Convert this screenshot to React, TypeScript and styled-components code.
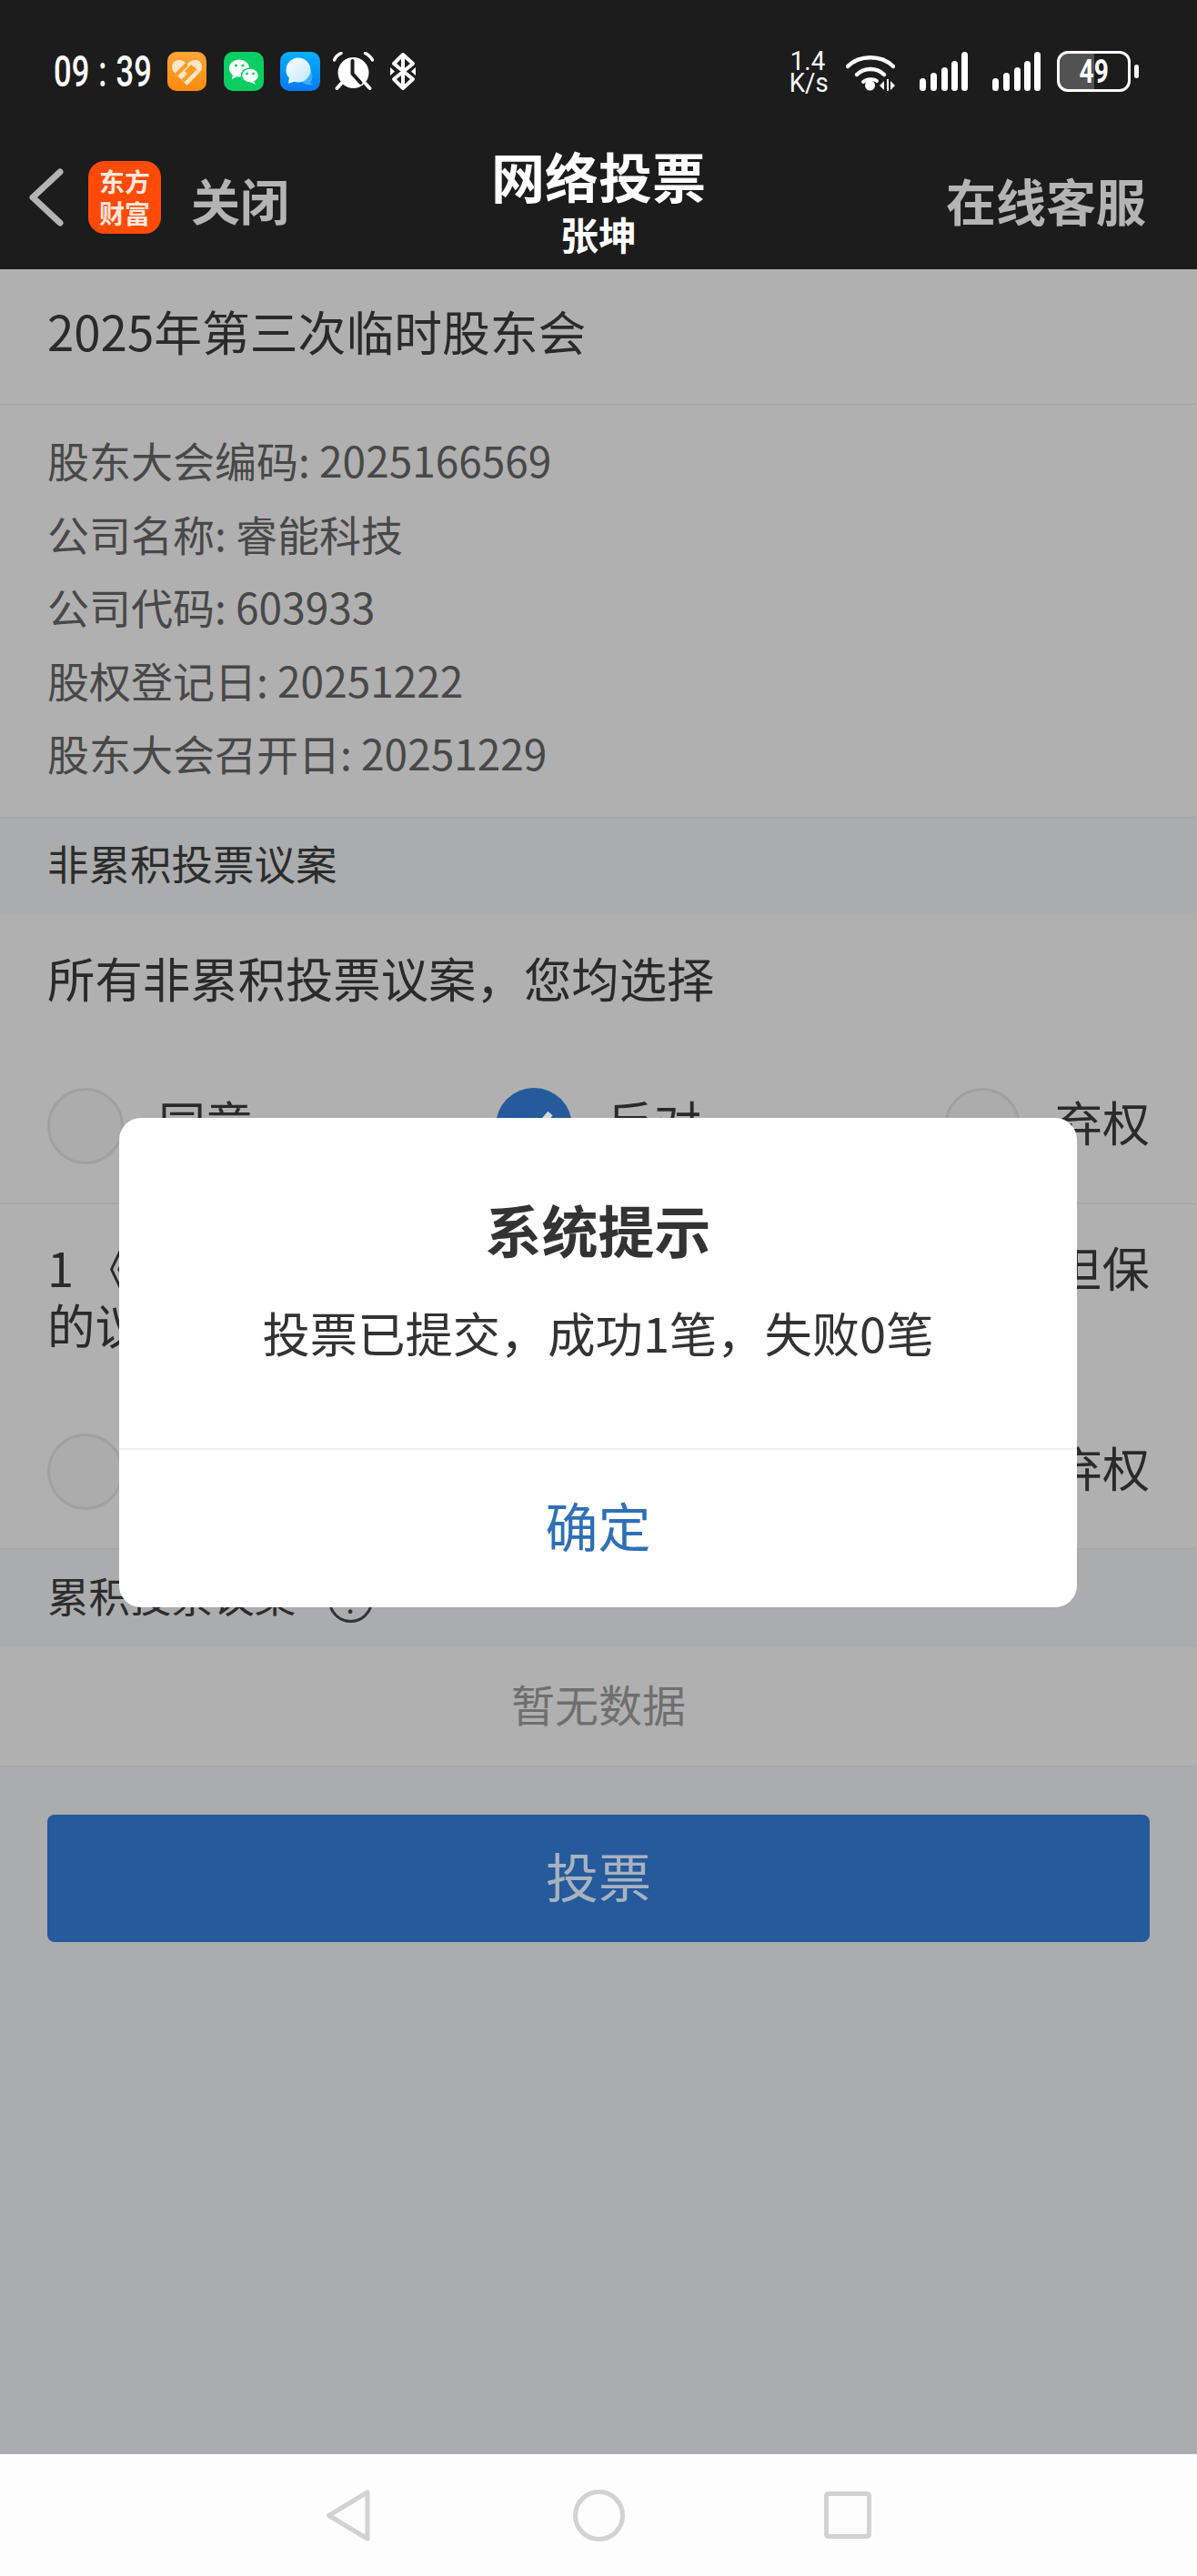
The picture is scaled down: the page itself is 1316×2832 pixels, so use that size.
import React from "react";
import styled, { createGlobalStyle } from "styled-components";

const Global = createGlobalStyle`
  html, body { margin: 0; padding: 0; background: #abacae; }
  * { box-sizing: border-box; }
  body { font-family: "Noto Sans CJK SC", "Noto Sans", sans-serif; }
`;

const Page = styled.div`
  position: relative;
  width: 1316px;
  height: 2832px;
  overflow: hidden;
  display: flex;
  flex-direction: column;
  background: #abacae;
`;

const StatusBar = styled.div`
  height: 130px;
  flex: none;
  background: #1c1c1c;
  display: flex;
  align-items: center;
  justify-content: space-between;
  padding: 27px 64px 0 59px;
  color: #fff;
`;
const StatusGroup = styled.div`
  display: flex;
  align-items: center;
`;
const Clock = styled.div`
  font: 500 48px/48px Roboto, sans-serif;
  width: 125px;
  flex: none;
  transform: scaleX(0.72);
  transform-origin: left center;
  white-space: nowrap;
`;
const ClockColon = styled.span`
  margin: 0 14px;
`;
const NotifySvg = styled.svg<{ $gap?: number }>`
  display: block;
  flex: none;
  margin-right: ${(p) => p.$gap ?? 0}px;
`;
const Speed = styled.div`
  font: 400 30px/24px Roboto, sans-serif;
  width: 44px;
  margin-right: 20px;
  text-align: center;
  white-space: nowrap;
  transform: scaleX(0.92);
`;
const Battery = styled.div`
  position: relative;
  width: 81px;
  height: 45px;
  border: 3px solid #fff;
  border-radius: 12px;
  overflow: hidden;
  display: flex;
  align-items: center;
  justify-content: center;
  background: linear-gradient(to right, #525252 0 38px, #1c1c1c 38px);
`;
const BatteryNum = styled.span`
  font: 700 36px/36px Roboto, sans-serif;
  transform: scaleX(0.78);
`;
const BatteryCap = styled.div`
  width: 5px;
  height: 15px;
  border-radius: 3px;
  background: #fff;
  margin-left: 4px;
`;

const NavBar = styled.div`
  height: 166px;
  flex: none;
  background: #1c1c1c;
  display: grid;
  grid-template-columns: 1fr auto 1fr;
  align-items: center;
  padding: 0 56px;
`;
const NavLeft = styled.div`
  display: flex;
  align-items: center;
  padding-top: 8px;
  margin-left: -25px;
`;
const AppLogo = styled.div`
  width: 80px;
  height: 80px;
  margin: 0 33px 0 27px;
  border-radius: 18px;
  background: #ff4a08;
  color: #ffe9df;
  display: flex;
  flex-direction: column;
  align-items: center;
  justify-content: center;
  font-weight: 700;
  font-size: 28px;
  line-height: 35px;
`;
const NavAction = styled.span`
  font-size: 54px;
  line-height: 60px;
  font-weight: 700;
  color: #b4b4b4;
  white-space: nowrap;
  margin-top: 6px;
`;
const NavRight = styled(NavAction)`
  justify-self: end;
  font-size: 55px;
  margin-top: 11px;
`;
const NavCenter = styled.div`
  display: flex;
  flex-direction: column;
  align-items: center;
  color: #fff;
  font-weight: 700;
  margin-top: 13px;
`;
const NavTitle = styled.div`
  font-size: 59px;
  line-height: 72px;
`;
const NavSub = styled.div`
  font-size: 42px;
  line-height: 50px;
  margin-top: 3px;
`;

const Plain = styled.div`
  background: #b0b0b0;
  border-bottom: 2px solid #a7a7a7;
`;
const MeetingTitle = styled(Plain)`
  height: 150px;
  padding: 32px 52px 0;
  font-size: 52.8px;
  line-height: 70px;
  color: #2a2a2a;
`;
const InfoBlock = styled(Plain)`
  height: 454px;
  padding: 19px 52px 0;
`;
const InfoLine = styled.div`
  font-size: 46px;
  line-height: 80.5px;
  color: #484848;
  white-space: nowrap;
`;
const SectionHead = styled.div<{ $h: number }>`
  height: ${(p) => p.$h}px;
  display: flex;
  align-items: center;
  gap: 36px;
  padding: 0 52px 10px;
  background: #abacae;
  font-size: 45.5px;
  color: #2c2c2c;
`;
const HelpMark = styled.span`
  width: 49px;
  height: 49px;
  margin-top: 14px;
  border: 3px solid #333;
  border-radius: 50%;
  display: flex;
  align-items: center;
  justify-content: center;
  font-size: 34px;
  line-height: 1;
  color: #333;
`;
const Question = styled(Plain)<{ $h: number }>`
  height: ${(p) => p.$h}px;
  padding: 37px 52px 0;
  display: flex;
  flex-direction: column;
`;
const QuestionText = styled.div`
  font-size: 52.4px;
  line-height: 63px;
  color: #2a2a2a;
  text-align: justify;
  text-align-last: left;
  flex: 1;
`;
const Options = styled.div`
  display: grid;
  grid-template-columns: 1fr auto 1fr;
  align-items: center;
  margin-bottom: 42px;
`;
const Option = styled.div<{ $align: string }>`
  display: flex;
  align-items: center;
  gap: 38px;
  justify-self: ${(p) => p.$align};
  font-size: 52px;
  color: #2a2a2a;
`;
const OptionLabel = styled.span`
  padding-bottom: 10px;
`;
const Radio = styled.span<{ $on?: boolean }>`
  width: 84px;
  height: 84px;
  border-radius: 50%;
  flex: none;
  display: flex;
  align-items: center;
  justify-content: center;
  background: ${(p) => (p.$on ? "#255a9c" : "#acacac")};
  border: ${(p) => (p.$on ? "none" : "3px solid #a0a0a0")};
`;
const Empty = styled(Plain)`
  height: 132px;
  padding-bottom: 8px;
  display: flex;
  align-items: center;
  justify-content: center;
  font-size: 48px;
  color: #6f6f6f;
`;
const Body = styled.div`
  flex: 1;
  padding: 52px 52px 0;
  background: #abacae;
`;
const VoteButton = styled.div`
  height: 140px;
  padding-bottom: 8px;
  border-radius: 8px;
  background: #255a9c;
  color: #a8b2bf;
  display: flex;
  align-items: center;
  justify-content: center;
  font-size: 58px;
`;
const BottomBar = styled.div`
  height: 134px;
  flex: none;
  background: #fdfdfd;
  display: flex;
  align-items: center;
  padding-left: 358px;
`;

const Modal = styled.div`
  position: absolute;
  left: 131px;
  top: 1229px;
  width: 1053px;
  height: 538px;
  border-radius: 24px;
  background: #fff;
  display: flex;
  flex-direction: column;
`;
const ModalBody = styled.div`
  height: 365px;
  flex: none;
  border-bottom: 2px solid #f0f0f0;
  padding-top: 78px;
  text-align: center;
  color: #333;
`;
const ModalTitle = styled.div`
  font-size: 62px;
  line-height: 88px;
  font-weight: 700;
`;
const ModalMessage = styled.div`
  font-size: 52.3px;
  line-height: 76px;
  margin-top: 31px;
`;
const ModalAction = styled.div`
  flex: 1;
  padding-bottom: 10px;
  display: flex;
  align-items: center;
  justify-content: center;
  font-size: 58px;
  color: #2f6fb6;
`;
const EdgeStrip = styled.div`
  position: absolute;
  left: 131px;
  top: 1648px;
  width: 5px;
  height: 56px;
  background: #e2e2e2;
`;

const Heart = () => (
  <NotifySvg $gap={19} width="43" height="43" viewBox="0 0 43 43">
    <defs>
      <linearGradient id="hg" x1="0" y1="0" x2="0" y2="1">
        <stop offset="0" stopColor="#ffa43a" />
        <stop offset="1" stopColor="#ff8a0c" />
      </linearGradient>
    </defs>
    <rect width="43" height="43" rx="10" fill="url(#hg)" />
    <path
      d="M21.5 37 L7 22 C3.5 17.5 5 10 11.5 9 C15.5 8.5 19 10.5 21.5 14 C24 10.5 28 8.5 32 9 C38 10 40 17.5 36 22 Z"
      fill="#ffe6c6"
    />
    <path d="M10 25 L21.5 13.5 M17 32 L31 18" stroke="#ff9a22" strokeWidth="4" fill="none" />
    <path d="M24 27 L32 19 L26 14 L19 21 Z" fill="#ff9a22" />
  </NotifySvg>
);
const WeChat = () => (
  <NotifySvg $gap={18} width="44" height="43" viewBox="0 0 44 43">
    <rect width="44" height="43" rx="10" fill="#0bce63" />
    <ellipse cx="17" cy="18" rx="11" ry="9.5" fill="#fff" />
    <path d="M10 24 L9 30 L15 27 Z" fill="#fff" />
    <ellipse cx="29" cy="26" rx="9.5" ry="8" fill="#fff" stroke="#0bce63" strokeWidth="1.5" />
    <path d="M33 32 L35 36 L29 33 Z" fill="#fff" />
    <circle cx="13.5" cy="15" r="1.6" fill="#0bce63" />
    <circle cx="21" cy="15" r="1.6" fill="#0bce63" />
    <circle cx="25.5" cy="24" r="1.4" fill="#0bce63" />
    <circle cx="32.5" cy="24" r="1.4" fill="#0bce63" />
  </NotifySvg>
);
const Bubble = () => (
  <NotifySvg $gap={14} width="44" height="43" viewBox="0 0 44 43">
    <defs>
      <linearGradient id="bg" x1="0" y1="0" x2="0" y2="1">
        <stop offset="0" stopColor="#06b0ff" />
        <stop offset="1" stopColor="#0a78f0" />
      </linearGradient>
      <linearGradient id="bw" x1="0" y1="0" x2="1" y2="1">
        <stop offset="0" stopColor="#ffffff" />
        <stop offset="1" stopColor="#bfe6ff" />
      </linearGradient>
    </defs>
    <rect width="44" height="43" rx="10" fill="url(#bg)" />
    <path d="M30 18 C36 20 37 30 33 34 L36 36 C30 37 26 35 24 33 Z" fill="#35b4f5" />
    <circle cx="20" cy="20" r="13.5" fill="url(#bw)" />
    <path d="M10 28 L9 35 L17 32 Z" fill="#e3f4ff" />
  </NotifySvg>
);
const Alarm = () => (
  <NotifySvg $gap={17} width="45" height="43" viewBox="0 0 45 43">
    <circle cx="22.5" cy="23" r="17" fill="#fff" />
    <path d="M1.5 9 C3 5.5 5.5 3 9 1.5 M35.5 1.5 C39 3 41.5 5.5 43.5 9" stroke="#fff" strokeWidth="3.5" fill="none" strokeLinecap="round" />
    <path d="M9 35 L4.5 40 M36 35 L40.5 40" stroke="#fff" strokeWidth="4" strokeLinecap="round" />
    <path d="M21.5 10 L21.5 24 L30.5 34" stroke="#1c1c1c" strokeWidth="4" fill="none" strokeLinecap="round" strokeLinejoin="round" />
  </NotifySvg>
);
const Bluetooth = () => (
  <NotifySvg width="30" height="43" viewBox="0 0 30 43">
    <path
      d="M15 3 L15 40 L26 30 L5 13 L15 3 Z M15 3 L26 13 L5 30 L15 40"
      fill="none"
      stroke="#fff"
      strokeWidth="4"
      strokeLinejoin="round"
    />
    <path d="M1 17 L6 21.5 L1 26 Z M29 17 L24 21.5 L29 26 Z" fill="#fff" />
  </NotifySvg>
);
const Wifi = () => (
  <NotifySvg $gap={27} width="54" height="44" viewBox="0 0 54 44">
    <path d="M2 16 C15 3 39 3 52 16" stroke="#fff" strokeWidth="4.5" fill="none" strokeLinecap="round" />
    <path d="M12 25 C20 17 34 17 42 25" stroke="#fff" strokeWidth="4.5" fill="none" strokeLinecap="round" />
    <path d="M19 33 C23 29.5 31 29.5 34 32" stroke="#fff" strokeWidth="4" fill="none" strokeLinecap="round" />
    <circle cx="26.5" cy="37" r="5.5" fill="#fff" />
    <path d="M42 32 L42 42 L37 37 Z M45 30 L47 30 L47 43 L45 43 Z M49 32 L54 37 L49 42 Z" fill="#fff" />
  </NotifySvg>
);
const Signal = ({ gap }: { gap: number }) => (
  <NotifySvg $gap={gap} width="53" height="43" viewBox="0 0 53 43">
    <rect x="0" y="29" width="7" height="14" rx="3.5" fill="#fff" />
    <rect x="12" y="23" width="7" height="20" rx="3.5" fill="#fff" />
    <rect x="24" y="17" width="7" height="26" rx="3.5" fill="#fff" />
    <rect x="35" y="10" width="7" height="33" rx="3.5" fill="#fff" />
    <rect x="46" y="0" width="7" height="43" rx="3.5" fill="#fff" />
  </NotifySvg>
);
const Chevron = () => (
  <NotifySvg width="39" height="64" viewBox="0 0 39 64">
    <path d="M35 4 L5 32 L35 60" stroke="#b4b4b4" strokeWidth="7" fill="none" strokeLinecap="round" strokeLinejoin="round" />
  </NotifySvg>
);
const Check = () => (
  <svg width="46" height="40" viewBox="0 0 46 40">
    <path d="M5 20 L18 33 L41 6" stroke="#d8d8d8" strokeWidth="7" fill="none" />
  </svg>
);
const NavBack = () => (
  <NotifySvg $gap={223} width="49" height="57" viewBox="0 0 49 57">
    <path d="M46 3 L46 54 L3.5 28.5 Z" fill="none" stroke="#d2d2d2" strokeWidth="5" strokeLinejoin="round" />
  </NotifySvg>
);
const NavHome = () => (
  <NotifySvg $gap={219} width="57" height="57" viewBox="0 0 57 57">
    <circle cx="28.5" cy="28.5" r="26" fill="none" stroke="#d2d2d2" strokeWidth="5" />
  </NotifySvg>
);
const NavRecent = () => (
  <NotifySvg width="52" height="52" viewBox="0 0 52 52">
    <rect x="2.5" y="2.5" width="47" height="47" rx="2" fill="none" stroke="#d2d2d2" strokeWidth="5" />
  </NotifySvg>
);

const Choices = ({ picked }: { picked: number }) => (
  <Options>
    {["同意", "反对", "弃权"].map((label, i) => (
      <Option key={label} $align={["start", "center", "end"][i]}>
        <Radio $on={picked === i}>{picked === i && <Check />}</Radio>
        <OptionLabel>{label}</OptionLabel>
      </Option>
    ))}
  </Options>
);

export default function App() {
  return (
    <Page>
      <Global />
      <StatusBar>
        <StatusGroup>
          <Clock>
            09<ClockColon>:</ClockColon>39
          </Clock>
          <Heart />
          <WeChat />
          <Bubble />
          <Alarm />
          <Bluetooth />
        </StatusGroup>
        <StatusGroup>
          <Speed>
            1.4
            <br />
            K/s
          </Speed>
          <Wifi />
          <Signal gap={27} />
          <Signal gap={18} />
          <Battery>
            <BatteryNum>49</BatteryNum>
          </Battery>
          <BatteryCap />
        </StatusGroup>
      </StatusBar>
      <NavBar>
        <NavLeft>
          <Chevron />
          <AppLogo>
            <span>东方</span>
            <span>财富</span>
          </AppLogo>
          <NavAction>关闭</NavAction>
        </NavLeft>
        <NavCenter>
          <NavTitle>网络投票</NavTitle>
          <NavSub>张坤</NavSub>
        </NavCenter>
        <NavRight>在线客服</NavRight>
      </NavBar>
      <MeetingTitle>2025年第三次临时股东会</MeetingTitle>
      <InfoBlock>
        <InfoLine>股东大会编码: 2025166569</InfoLine>
        <InfoLine>公司名称: 睿能科技</InfoLine>
        <InfoLine>公司代码: 603933</InfoLine>
        <InfoLine>股权登记日: 20251222</InfoLine>
        <InfoLine>股东大会召开日: 20251229</InfoLine>
      </InfoBlock>
      <SectionHead $h={106}>非累积投票议案</SectionHead>
      <Question $h={318}>
        <QuestionText>所有非累积投票议案，您均选择</QuestionText>
        <Choices picked={1} />
      </Question>
      <Question $h={380}>
        <QuestionText>1 《关于公司2026年度为子公司申请授信并提供担保的议案》</QuestionText>
        <Choices picked={1} />
      </Question>
      <SectionHead $h={107}>
        累积投票议案
        <HelpMark>?</HelpMark>
      </SectionHead>
      <Empty>暂无数据</Empty>
      <Body>
        <VoteButton>投票</VoteButton>
      </Body>
      <BottomBar>
        <NavBack />
        <NavHome />
        <NavRecent />
      </BottomBar>
      <EdgeStrip />
      <Modal>
        <ModalBody>
          <ModalTitle>系统提示</ModalTitle>
          <ModalMessage>投票已提交，成功1笔，失败0笔</ModalMessage>
        </ModalBody>
        <ModalAction>确定</ModalAction>
      </Modal>
    </Page>
  );
}
